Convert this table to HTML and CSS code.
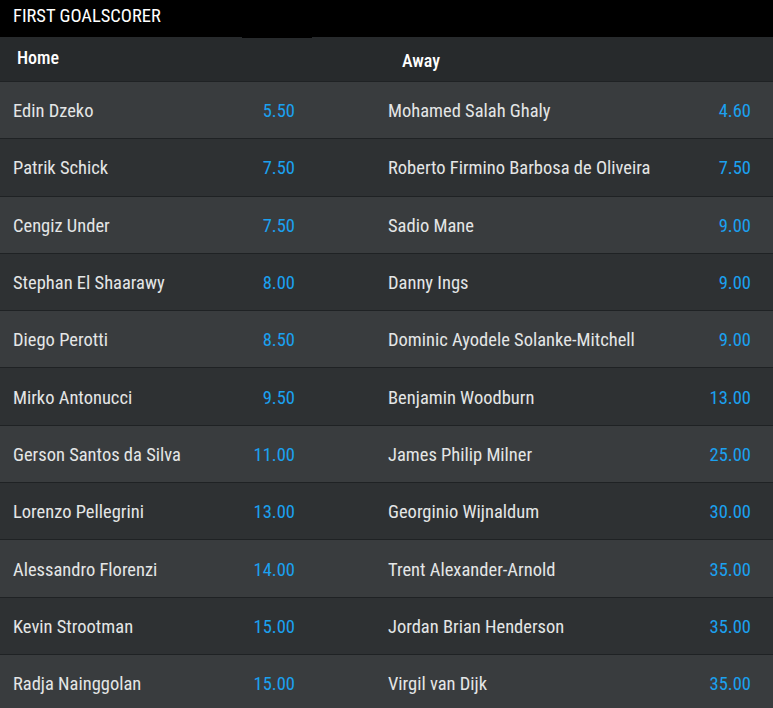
FILE: index.html
```html
<!DOCTYPE html>
<html>
<head>
<meta charset="utf-8">
<link rel="stylesheet" href="styles.css">
</head>
<body>
<div class="market">
  <div class="market-title">FIRST GOALSCORER</div>
  <div class="grid">
    <div class="col col-home">
      <div class="col-head">Home</div>
      <div class="row"><span class="name">Edin Dzeko</span><span class="odds">5.50</span></div>
      <div class="row"><span class="name">Patrik Schick</span><span class="odds">7.50</span></div>
      <div class="row"><span class="name">Cengiz Under</span><span class="odds">7.50</span></div>
      <div class="row"><span class="name">Stephan El Shaarawy</span><span class="odds">8.00</span></div>
      <div class="row"><span class="name">Diego Perotti</span><span class="odds">8.50</span></div>
      <div class="row"><span class="name">Mirko Antonucci</span><span class="odds">9.50</span></div>
      <div class="row"><span class="name">Gerson Santos da Silva</span><span class="odds">11.00</span></div>
      <div class="row"><span class="name">Lorenzo Pellegrini</span><span class="odds">13.00</span></div>
      <div class="row"><span class="name">Alessandro Florenzi</span><span class="odds">14.00</span></div>
      <div class="row"><span class="name">Kevin Strootman</span><span class="odds">15.00</span></div>
      <div class="row"><span class="name">Radja Nainggolan</span><span class="odds">15.00</span></div>
    </div>
    <div class="col col-away">
      <div class="col-head">Away</div>
      <div class="row"><span class="name">Mohamed Salah Ghaly</span><span class="odds">4.60</span></div>
      <div class="row"><span class="name">Roberto Firmino Barbosa de Oliveira</span><span class="odds">7.50</span></div>
      <div class="row"><span class="name">Sadio Mane</span><span class="odds">9.00</span></div>
      <div class="row"><span class="name">Danny Ings</span><span class="odds">9.00</span></div>
      <div class="row"><span class="name">Dominic Ayodele Solanke-Mitchell</span><span class="odds">9.00</span></div>
      <div class="row"><span class="name">Benjamin Woodburn</span><span class="odds">13.00</span></div>
      <div class="row"><span class="name">James Philip Milner</span><span class="odds">25.00</span></div>
      <div class="row"><span class="name">Georginio Wijnaldum</span><span class="odds">30.00</span></div>
      <div class="row"><span class="name">Trent Alexander-Arnold</span><span class="odds">35.00</span></div>
      <div class="row"><span class="name">Jordan Brian Henderson</span><span class="odds">35.00</span></div>
      <div class="row"><span class="name">Virgil van Dijk</span><span class="odds">35.00</span></div>
    </div>
  </div>
</div>
</body>
</html>
```
FILE: styles.css
```css
* { box-sizing: border-box; }
html, body { margin: 0; padding: 0; background: #2e3133; }
body {
  font-family: "Roboto Condensed", "Liberation Sans Narrow", Roboto, sans-serif;
  color: #e4e6e6;
  overflow: hidden;
}
.market { width: 773px; }
.market-title {
  position: relative;
  height: 37px;
  background: #000;
  color: #fff;
  font-size: 18.5px;
  line-height: 33px;
  padding-left: 13px;
}
.market-title::after {
  content: "";
  position: absolute;
  left: 242px;
  width: 70px;
  top: 37px;
  height: 1px;
  background: #000;
}
.grid {
  display: grid;
  grid-template-columns: 381px 392px;
}
.col-head {
  height: 45px;
  background: #272a2c;
  border-bottom: 1px solid #1f2224;
  color: #fff;
  font-size: 18px;
  font-weight: 500;
  display: flex;
  align-items: center;
}
.col-home .col-head { padding: 0 0 3px 17px; }
.col-away .col-head { padding: 3px 0 0 21px; }
.row {
  height: 57.3px;
  display: flex;
  align-items: center;
  border-bottom: 1px solid #1f2224;
  font-size: 18.5px;
  padding-top: 2px;
  background: #2e3133;
}
.row:nth-child(even) { background: #393c3e; }
.name { flex: 1; }
.odds { color: #1ba1f0; text-align: right; }
.col-home .row { padding-left: 13px; padding-right: 86px; }
.col-away .row { padding-left: 7px; padding-right: 22px; }
```
